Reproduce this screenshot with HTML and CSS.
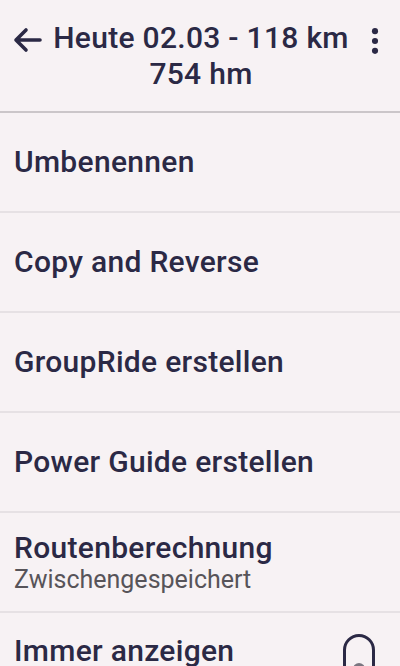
FILE: index.html
```
<!DOCTYPE html>
<html lang="de">
<head>
    <meta charset="UTF-8">
    <meta name="viewport" content="width=device-width, initial-scale=1.0">
    <title>Route</title>
    <link rel="stylesheet" href="styles.css">
</head>
<body>
    <div class="screen">
        <header class="topbar">
            <button class="icon-btn back" aria-label="Zurück">
                <svg width="32" height="32" viewBox="0 0 32 32"><path d="M29 16H5M15 6L5 16l10 10" fill="none" stroke="currentColor" stroke-width="3.6" stroke-linecap="round" stroke-linejoin="round"/></svg>
            </button>
            <h1 class="title">Heute 02.03 - 118 km 754 hm</h1>
            <button class="icon-btn more" aria-label="Mehr">
                <svg width="32" height="32" viewBox="0 0 24 24"><circle cx="12" cy="4.6" r="2.3" fill="currentColor"/><circle cx="12" cy="12" r="2.3" fill="currentColor"/><circle cx="12" cy="19.4" r="2.3" fill="currentColor"/></svg>
            </button>
        </header>

        <ul class="menu">
            <li class="item"><span class="label">Umbenennen</span></li>
            <li class="item"><span class="label">Copy and Reverse</span></li>
            <li class="item"><span class="label">GroupRide erstellen</span></li>
            <li class="item"><span class="label">Power Guide erstellen</span></li>
            <li class="item">
                <span class="label">Routenberechnung</span>
                <span class="sub">Zwischengespeichert</span>
            </li>
            <li class="item toggle-row">
                <span class="label">Immer anzeigen</span>
                <span class="switch"><span class="thumb"></span></span>
            </li>
        </ul>
    </div>
</body>
</html>
```

FILE: styles.css
```
html, body {
    margin: 0;
    padding: 0;
    background: #f7f2f4;
}
body {
    font-family: Roboto, "Noto Sans", sans-serif;
    color: #2b2945;
    overflow: hidden;
}
.screen {
    width: 400px;
    height: 666px;
    overflow: hidden;
}
.topbar {
    display: flex;
    align-items: center;
    height: 111px;
    padding: 0 8px 0 10px;
    border-bottom: 2px solid #cbc6c9;
    box-sizing: content-box;
}
.icon-btn {
    background: none;
    border: none;
    padding: 0;
    color: #2b2945;
    width: 34px;
    height: 36px;
    display: flex;
    align-items: center;
    justify-content: center;
    align-self: flex-start;
    margin-top: 22px;
}
.more {
    margin-top: 23px;
}
.title {
    flex: 1;
    margin: 0;
    text-align: center;
    font-size: 30px;
    font-weight: 500;
    letter-spacing: 0.3px;
    line-height: 36px;
    padding: 0 2px;
}
.menu {
    list-style: none;
    margin: 0;
    padding: 0;
}
.item {
    height: 98px;
    border-bottom: 2px solid #e6e1e4;
    padding: 0 14px;
    display: flex;
    flex-direction: column;
    justify-content: center;
}
.label {
    font-size: 30px;
    font-weight: 500;
    letter-spacing: 0.3px;
    line-height: 36px;
}
.sub {
    font-size: 25px;
    color: #575459;
    line-height: 28px;
    margin-top: 0;
}
.toggle-row {
    flex-direction: row;
    align-items: flex-start;
    justify-content: space-between;
    padding-top: 20px;
    padding-right: 25px;
    box-sizing: border-box;
    height: 100px;
}
.switch {
    width: 26px;
    height: 50px;
    border: 3px solid #2b2945;
    border-radius: 16px;
    margin-top: 1px;
    position: relative;
}
.thumb {
    position: absolute;
    left: 7px;
    top: 26px;
    width: 12px;
    height: 12px;
    border-radius: 50%;
    background: #7a7680;
}
```
